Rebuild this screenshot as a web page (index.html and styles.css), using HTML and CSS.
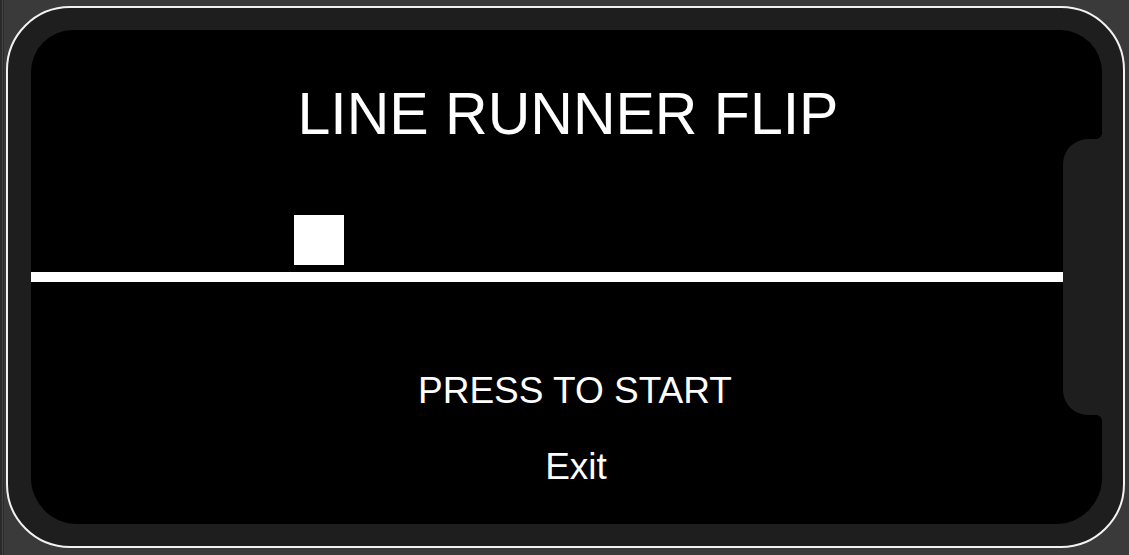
FILE: index.html
```html
<!DOCTYPE html>
<html lang="en">
<head>
<meta charset="utf-8">
<title>Line Runner Flip</title>
<link rel="stylesheet" href="styles.css">
</head>
<body>
  <div class="device">
    <div class="screen">
      <h1 class="title">LINE RUNNER FLIP</h1>
      <div class="stage">
        <div class="player"></div>
        <div class="ground"></div>
      </div>
      <div class="menu">
        <div class="menu-item start">PRESS TO START</div>
        <div class="menu-item exit">Exit</div>
      </div>
      <div class="notch"></div>
    </div>
  </div>
</body>
</html>
```
FILE: styles.css
```css
html, body {
  margin: 0;
  height: 555px;
  overflow: hidden;
}
body {
  box-sizing: border-box;
  padding: 6px 4px 7px 6px;
  background: linear-gradient(to right, #2a2a2a 0 2px, #444444 2px 3px, #2a2a2a 3px 4px, #3a3a3a 4px);
  font-family: "Liberation Sans", Arial, sans-serif;
  color: #ffffff;
}
.device {
  box-sizing: border-box;
  width: 1119px;
  height: 542px;
  border: 2px solid #f2f2f2;
  border-radius: 64px;
  background: #1e1e1e;
  padding: 22px 21px 22px 23px;
}
.screen {
  position: relative;
  height: 100%;
  background: #000000;
  border-radius: 42px 42px 46px 46px;
  display: flex;
  flex-direction: column;
}
.title {
  margin: 55px 0 0 3px;
  font-size: 59px;
  line-height: 59px;
  font-weight: normal;
  text-align: center;
}
.stage {
  margin-top: 71px;
  display: flex;
  flex-direction: column;
}
.player {
  width: 50px;
  height: 50px;
  margin-left: 263px;
  background: #ffffff;
}
.ground {
  margin-top: 7px;
  height: 10px;
  width: 1032px;
  background: #ffffff;
}
.menu {
  margin-top: 91px;
  display: flex;
  flex-direction: column;
  align-items: center;
  gap: 40px;
  padding-left: 17px;
}
.menu-item {
  font-size: 37px;
  line-height: 36px;
}
.exit {
  padding-left: 2px;
}
.notch {
  position: absolute;
  right: 0;
  top: 109px;
  width: 39px;
  height: 276px;
  background: #1e1e1e;
  border-radius: 25px 0 0 25px;
}
.notch::before,
.notch::after {
  content: "";
  position: absolute;
  right: 0;
  width: 7px;
  height: 7px;
}
.notch::before {
  top: -7px;
  background: radial-gradient(circle at 0 0, #000000 7px, #1e1e1e 7.5px);
}
.notch::after {
  bottom: -7px;
  background: radial-gradient(circle at 0 100%, #000000 7px, #1e1e1e 7.5px);
}
```
